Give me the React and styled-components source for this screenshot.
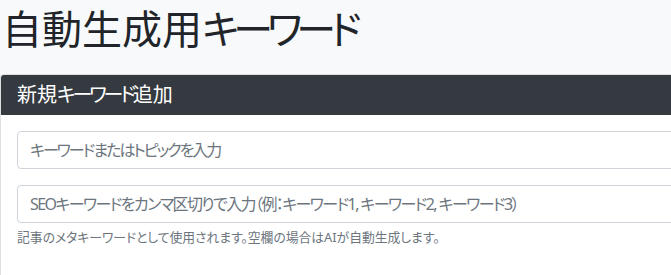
import React from "react";
import styled, { createGlobalStyle } from "styled-components";

const GlobalStyle = createGlobalStyle`
  html, body {
    margin: 0;
    padding: 0;
    background: #f8f9fa;
    overflow: hidden;
  }
  body {
    font-family: "Noto Sans", "Noto Sans CJK JP", sans-serif;
    font-feature-settings: "palt";
    color: #212529;
  }
`;

const Page = styled.div`
  width: 1000px;
`;

const Title = styled.h1`
  margin: 5px 0 21px 2px;
  font-size: 40px;
  font-weight: 400;
  line-height: 48px;
  color: #212529;
`;

// kana runs are set tighter to match the narrow UI font of the original
const Kana = styled.span`
  letter-spacing: ${(p) => p.$tight}em;
`;

const kanaRun = /([\u3040-\u30ff]+)/;

const Jp = ({ text, tight }) =>
  text.split(kanaRun).map((part, i) =>
    kanaRun.test(part) ? (
      <Kana key={i} $tight={tight}>
        {part}
      </Kana>
    ) : (
      part
    )
  );

const Card = styled.div`
  background: #fff;
  border: 1px solid rgba(0, 0, 0, 0.125);
  border-radius: 4px;
  overflow: hidden;
`;

const CardHeader = styled.div`
  background: #343a40;
  color: #fff;
  font-size: 20px;
  line-height: 24px;
  padding: 8px 16px;
`;

const CardBody = styled.div`
  padding: 16px 16px 40px;
`;

const Field = styled.div`
  & + & {
    margin-top: 16px;
  }
`;

const Input = styled.input`
  display: block;
  box-sizing: border-box;
  width: 100%;
  height: 38px;
  padding: 6px 12px;
  font: inherit;
  font-size: 16px;
  letter-spacing: ${(p) => p.$spacing || 0}px;
  color: #495057;
  background: #fff;
  border: 1px solid #ced4da;
  border-radius: 4px;
  outline: none;
  &::placeholder {
    color: #6c757d;
  }
`;

const Help = styled.small`
  display: block;
  margin-top: 5px;
  font-size: 12.8px;
  line-height: 19px;
  color: #6c757d;
`;

export default function App() {
  return (
    <>
      <GlobalStyle />
      <Page>
        <Title>
          <Jp text="自動生成用キーワード" tight={-0.15} />
        </Title>
        <Card>
          <CardHeader>
            <Jp text="新規キーワード追加" tight={-0.16} />
          </CardHeader>
          <CardBody>
            <Field>
              <Input
                $spacing={-2}
                placeholder="キーワードまたはトピックを入力"
              />
            </Field>
            <Field>
              <Input
                $spacing={-1.6}
                placeholder="SEOキーワードをカンマ区切りで入力（例：キーワード1, キーワード2, キーワード3）"
              />
              <Help>
                記事のメタキーワードとして使用されます。空欄の場合はAIが自動生成します。
              </Help>
            </Field>
          </CardBody>
        </Card>
      </Page>
    </>
  );
}
